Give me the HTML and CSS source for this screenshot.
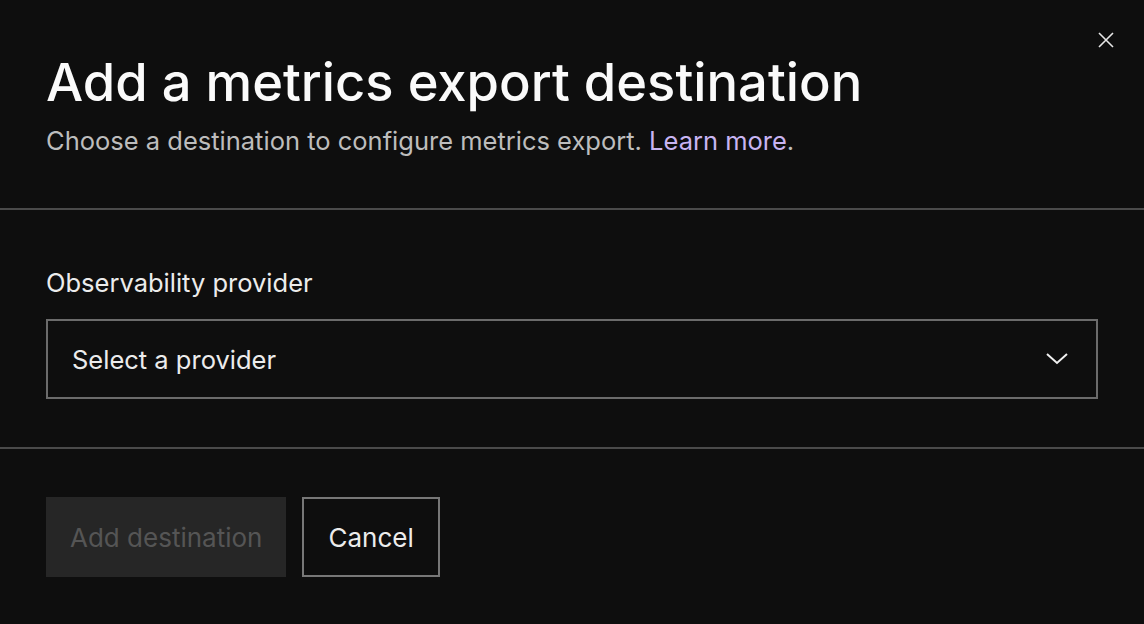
FILE: index.html
```html
<!DOCTYPE html>
<html lang="en">
  <head>
    <meta charset="UTF-8" />
    <meta name="viewport" content="width=device-width, initial-scale=1.0" />
    <title>Add a metrics export destination</title>
    <link rel="stylesheet" href="styles.css">
  </head>
  <body>
    <div class="modal">
      <button class="close" aria-label="Close">
        <svg width="18" height="18" viewBox="0 0 18 18">
          <path d="M2 2L16 16M16 2L2 16" stroke="#e6e6e6" stroke-width="1.6" fill="none" />
        </svg>
      </button>
      <header class="modal-header">
        <h1>Add a metrics export destination</h1>
        <p>Choose a destination to configure metrics export. <a href="#">Learn more</a>.</p>
      </header>
      <div class="modal-body">
        <label for="provider">Observability provider</label>
        <div class="select" id="provider">
          <span>Select a provider</span>
          <svg width="22" height="14" viewBox="0 0 22 14">
            <path d="M1 2L11 11L21 2" stroke="#f0f0f0" stroke-width="2" fill="none" />
          </svg>
        </div>
      </div>
      <div class="modal-footer">
        <button class="btn btn-primary" disabled>Add destination</button>
        <button class="btn btn-secondary">Cancel</button>
      </div>
    </div>
  </body>
</html>
```

FILE: styles.css
```css
body {
  margin: 0;
  padding: 0;
  background-color: #0e0e0e;
  color: #f0f0f0;
  font-family: Inter, "Liberation Sans", sans-serif;
}
.modal {
  position: relative;
  height: 624px;
}
.close {
  position: absolute;
  top: 31px;
  right: 29px;
  background: none;
  border: none;
  padding: 0;
  cursor: pointer;
}
.modal-header {
  padding: 50px 46px 52px;
  border-bottom: 2px solid #4a4a4a;
}
.modal-header h1 {
  margin: 0;
  font-size: 52.5px;
  font-weight: 500;
  letter-spacing: 0;
  line-height: 64px;
  color: #fafafa;
}
.modal-header p {
  margin: 12px 0 0;
  font-size: 25.5px;
  line-height: 30px;
  color: #bdbdbd;
}
.modal-header a {
  color: #c8b4f2;
  text-decoration: none;
}
.modal-body {
  padding: 58px 46px 48px;
  border-bottom: 2px solid #4a4a4a;
}
.modal-body label {
  display: block;
  font-size: 25.5px;
  line-height: 30px;
  margin-bottom: 21px;
  color: #ececec;
}
.select {
  display: flex;
  align-items: center;
  justify-content: space-between;
  height: 76px;
  padding: 0 28px 0 24px;
  border: 2px solid #6b6b6b;
  font-size: 25.5px;
  color: #ececec;
}
.modal-footer {
  display: flex;
  gap: 16px;
  padding: 48px 46px;
}
.btn {
  height: 80px;
  padding: 0 24px;
  font-family: inherit;
  font-size: 26px;
  cursor: pointer;
}
.btn-primary {
  background-color: #262626;
  color: #555;
  border: none;
  cursor: default;
}
.btn-secondary {
  background-color: transparent;
  color: #ececec;
  border: 2px solid #777;
}
```
